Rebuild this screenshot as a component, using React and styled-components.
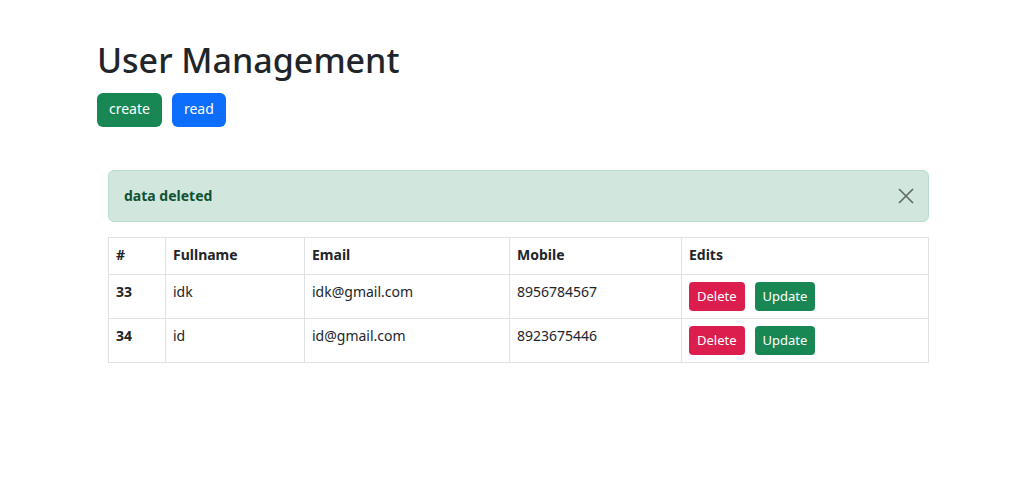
import React from 'react'
import styled, { createGlobalStyle } from 'styled-components'

const GlobalStyle = createGlobalStyle`
  body {
    margin: 0;
    background: #fff;
    color: #212529;
    font-family: "Noto Sans", "Open Sans", sans-serif;
  }
`;

const Page = styled.div`
  padding: 36px 97px 0 97px;
`;

const Title = styled.h1`
  margin: 0 0 9px 0;
  font-size: 34px;
  font-weight: 500;
  line-height: 48px;
  color: #212529;
`;

const Actions = styled.div`
  display: flex;
  gap: 10px;
`;

const NavButton = styled.button`
  height: 34px;
  padding: 0 12px 3px 12px;
  border: none;
  border-radius: 6px;
  background: ${p => p.$color};
  color: #fff;
  font-family: inherit;
  font-size: 14px;
  cursor: pointer;
`;

const Panel = styled.div`
  margin: 43px 9px 0 11px;
`;

const Alert = styled.div`
  display: flex;
  align-items: center;
  justify-content: space-between;
  padding: 15px 14px 15px 15px;
  margin-bottom: 15px;
  background: #d1e7dd;
  border: 1px solid #badbcc;
  border-radius: 6px;
  color: #0f5132;
  font-size: 14px;
  font-weight: 700;
  line-height: 20px;
`;

const Close = styled.button`
  display: flex;
  border: none;
  background: none;
  padding: 0;
  cursor: pointer;
  opacity: 0.55;
`;

const Table = styled.table`
  width: 100%;
  table-layout: fixed;
  border-collapse: collapse;
  font-size: 14px;
  line-height: 21px;
`;

const Th = styled.th`
  box-sizing: border-box;
  width: ${p => (p.$w ? `${p.$w}px` : 'auto')};
  padding: 6px 7px 9px 7px;
  border: 1px solid #dee2e6;
  text-align: left;
  font-weight: 700;
`;

const Td = styled.td`
  padding: 6px 7px 7px 7px;
  border: 1px solid #dee2e6;
  vertical-align: top;
  font-weight: ${p => (p.$bold ? 700 : 400)};
`;

const ButtonRow = styled.div`
  display: flex;
  gap: 10px;
  padding-top: 1px;
`;

const SmallButton = styled.button`
  height: 29px;
  padding: 0 8px 2px 8px;
  border: none;
  border-radius: 4px;
  background: ${p => p.$color};
  color: #fff;
  font-family: inherit;
  font-size: 13px;
  cursor: pointer;
`;

const users = [
  { id: 33, name: 'idk', email: 'idk@gmail.com', mobile: '8956784567' },
  { id: 34, name: 'id', email: 'id@gmail.com', mobile: '8923675446' },
];

const App = () => {
  return (
    <Page>
      <GlobalStyle />
      <Title>User Management</Title>
      <Actions>
        <NavButton $color="#198754">create</NavButton>
        <NavButton $color="#0d6efd">read</NavButton>
      </Actions>
      <Panel>
        <Alert>
          <span>data deleted</span>
          <Close aria-label="close">
            <svg width="16" height="16" viewBox="0 0 16 16">
              <path d="M1 1L15 15M15 1L1 15" stroke="#000" strokeWidth="1.6" fill="none" />
            </svg>
          </Close>
        </Alert>
        <Table>
          <thead>
            <tr>
              <Th $w={57}>#</Th>
              <Th $w={139}>Fullname</Th>
              <Th $w={205}>Email</Th>
              <Th $w={172}>Mobile</Th>
              <Th>Edits</Th>
            </tr>
          </thead>
          <tbody>
            {users.map(u => (
              <tr key={u.id}>
                <Td $bold>{u.id}</Td>
                <Td>{u.name}</Td>
                <Td>{u.email}</Td>
                <Td>{u.mobile}</Td>
                <Td>
                  <ButtonRow>
                    <SmallButton $color="#dc1e4e">Delete</SmallButton>
                    <SmallButton $color="#198754">Update</SmallButton>
                  </ButtonRow>
                </Td>
              </tr>
            ))}
          </tbody>
        </Table>
      </Panel>
    </Page>
  )
}

export default App
